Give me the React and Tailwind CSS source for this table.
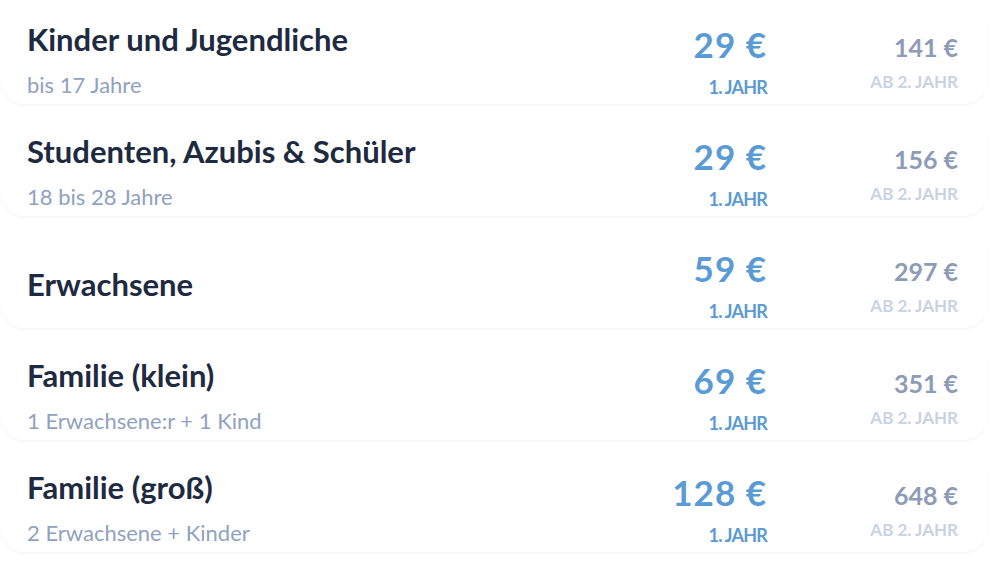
const tiers = [
  { name: 'Kinder und Jugendliche', note: 'bis 17 Jahre', first: '29 €', later: '141 €' },
  { name: 'Studenten, Azubis & Schüler', note: '18 bis 28 Jahre', first: '29 €', later: '156 €' },
  { name: 'Erwachsene', note: null, first: '59 €', later: '297 €' },
  { name: 'Familie (klein)', note: '1 Erwachsene:r + 1 Kind', first: '69 €', later: '351 €' },
  { name: 'Familie (groß)', note: '2 Erwachsene + Kinder', first: '128 €', later: '648 €' },
];

function TierRow({ tier }) {
  return (
    <div className="mb-2 flex h-[104px] items-center rounded-3xl bg-white pl-[27px] pr-[30px] pt-[20px] shadow-[0_2px_3px_-1px_rgba(0,0,0,0.06)]">
      <div className="flex-1 pb-[5px]">
        <div className="text-[31px] font-bold leading-[36px] text-[#1e2a40]">{tier.name}</div>
        {tier.note && (
          <div className="mt-[15px] text-[22px] leading-[26px] text-[#8fa2bf]">{tier.note}</div>
        )}
      </div>

      <div className="w-[140px] text-right">
        <div className="text-[35px] font-bold leading-[34px] tracking-[1px] text-[#5b9bd5]">{tier.first}</div>
        <div className="mt-[16px] text-[18px] font-bold leading-[20px] tracking-[-0.8px] text-[#5b9bd5]">1. JAHR</div>
      </div>

      <div className="w-[191px] text-right">
        <div className="text-[25px] font-bold leading-[28px] text-[#8c9cb8]">{tier.later}</div>
        <div className="mt-[11px] text-[17px] font-bold leading-[20px] text-[#c7d3e3]">AB 2. JAHR</div>
      </div>
    </div>
  );
}

export default function App() {
  return (
    <div className="h-[574px] w-[1000px] overflow-hidden bg-white font-['Lato',sans-serif]">
      <div className="w-[988px]">
        {tiers.map((tier) => (
          <TierRow key={tier.name} tier={tier} />
        ))}
      </div>
    </div>
  );
}
